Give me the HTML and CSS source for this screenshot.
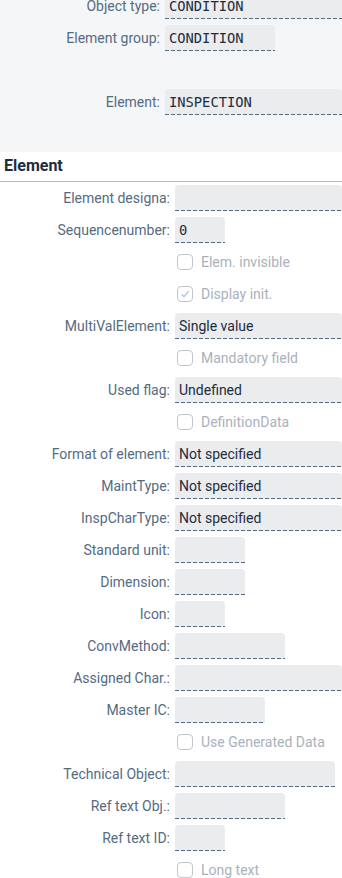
FILE: index.html
```html
<!DOCTYPE html>
<html>
<head>
    <title>Element</title>
    <meta charset="utf-8">
    <meta name="viewport" content="width=device-width, initial-scale=1.0" />
    <link rel="stylesheet" href="styles.css">
</head>
<body>
    <div class="header-area">
        <div class="row">
            <span class="label">Object type:</span>
            <span class="field mono w-full">CONDITION</span>
        </div>
        <div class="row">
            <span class="label">Element group:</span>
            <span class="field mono w110">CONDITION</span>
        </div>
        <div class="row"></div>
        <div class="row">
            <span class="label">Element:</span>
            <span class="field mono w-full">INSPECTION</span>
        </div>
    </div>

    <h2 class="section-title">Element</h2>

    <div class="form">
        <div class="row">
            <span class="label">Element designa:</span>
            <span class="field w-full"></span>
        </div>
        <div class="row">
            <span class="label">Sequencenumber:</span>
            <span class="field mono w50">0</span>
        </div>
        <div class="row">
            <span class="label"></span>
            <span class="check"><span class="box"></span>Elem. invisible</span>
        </div>
        <div class="row">
            <span class="label"></span>
            <span class="check"><span class="box"><svg width="14" height="14" viewBox="0 0 14 14"><polyline points="3.5,7.2 6,9.6 10.6,4.2" fill="none" stroke="#9dbfe8" stroke-width="1.2"/></svg></span>Display init.</span>
        </div>
        <div class="row">
            <span class="label">MultiValElement:</span>
            <span class="field w-full">Single value</span>
        </div>
        <div class="row">
            <span class="label"></span>
            <span class="check"><span class="box"></span>Mandatory field</span>
        </div>
        <div class="row">
            <span class="label">Used flag:</span>
            <span class="field w-full">Undefined</span>
        </div>
        <div class="row">
            <span class="label"></span>
            <span class="check"><span class="box"></span>DefinitionData</span>
        </div>
        <div class="row">
            <span class="label">Format of element:</span>
            <span class="field w-full">Not specified</span>
        </div>
        <div class="row">
            <span class="label">MaintType:</span>
            <span class="field w-full">Not specified</span>
        </div>
        <div class="row">
            <span class="label">InspCharType:</span>
            <span class="field w-full">Not specified</span>
        </div>
        <div class="row">
            <span class="label">Standard unit:</span>
            <span class="field w70"></span>
        </div>
        <div class="row">
            <span class="label">Dimension:</span>
            <span class="field w70"></span>
        </div>
        <div class="row">
            <span class="label">Icon:</span>
            <span class="field w50"></span>
        </div>
        <div class="row">
            <span class="label">ConvMethod:</span>
            <span class="field w110"></span>
        </div>
        <div class="row">
            <span class="label">Assigned Char.:</span>
            <span class="field w-full"></span>
        </div>
        <div class="row">
            <span class="label">Master IC:</span>
            <span class="field w90"></span>
        </div>
        <div class="row">
            <span class="label"></span>
            <span class="check"><span class="box"></span>Use Generated Data</span>
        </div>
        <div class="row">
            <span class="label">Technical Object:</span>
            <span class="field w160"></span>
        </div>
        <div class="row">
            <span class="label">Ref text Obj.:</span>
            <span class="field w110"></span>
        </div>
        <div class="row">
            <span class="label">Ref text ID:</span>
            <span class="field w50"></span>
        </div>
        <div class="row">
            <span class="label"></span>
            <span class="check"><span class="box"></span>Long text</span>
        </div>
    </div>
</body>
</html>
```

FILE: styles.css
```css
body {
    margin: 0;
    background-color: #fff;
    font-family: Roboto, "Liberation Sans", sans-serif;
    font-size: 14px;
    color: #1d2d3e;
    overflow: hidden;
}
.header-area {
    margin-top: -7px;
    padding-bottom: 31px;
    background-color: #f5f6f7;
}
.row {
    display: grid;
    grid-template-columns: 170px 1fr;
    column-gap: 5px;
    align-items: center;
    height: 26px;
    margin-bottom: 6px;
}
.header-area .row {
    grid-template-columns: 160px 1fr;
}
.label {
    text-align: right;
    color: #556b82;
    white-space: nowrap;
}
.field {
    box-sizing: border-box;
    height: 26px;
    line-height: 26px;
    padding-left: 4px;
    background-color: #eaecee;
    border-radius: 4px 4px 0 0;
    background-image: repeating-linear-gradient(to right, #556b82 0 4px, transparent 4px 6px);
    background-size: 100% 1px;
    background-position: left bottom;
    background-repeat: no-repeat;
    white-space: nowrap;
    overflow: hidden;
}
.mono {
    font-family: "DejaVu Sans Mono", "Liberation Mono", monospace;
    font-size: 13.75px;
}
.w-full { width: 100%; }
.w50 { width: 50px; }
.w70 { width: 70px; }
.w90 { width: 90px; }
.w110 { width: 110px; }
.w160 { width: 160px; }
.section-title {
    margin: 0;
    padding: 4px 4px 5px;
    font-size: 16px;
    line-height: 20px;
    font-weight: bold;
    border-bottom: 1px solid #b3b8bc;
}
.form {
    padding-top: 3px;
}
.check {
    display: flex;
    align-items: center;
    color: #a9b2bb;
}
.box {
    box-sizing: border-box;
    width: 16px;
    height: 16px;
    margin-left: 2px;
    margin-right: 8px;
    border: 1px solid #bfc6cd;
    border-radius: 4px;
    display: flex;
    align-items: center;
    justify-content: center;
}
```
